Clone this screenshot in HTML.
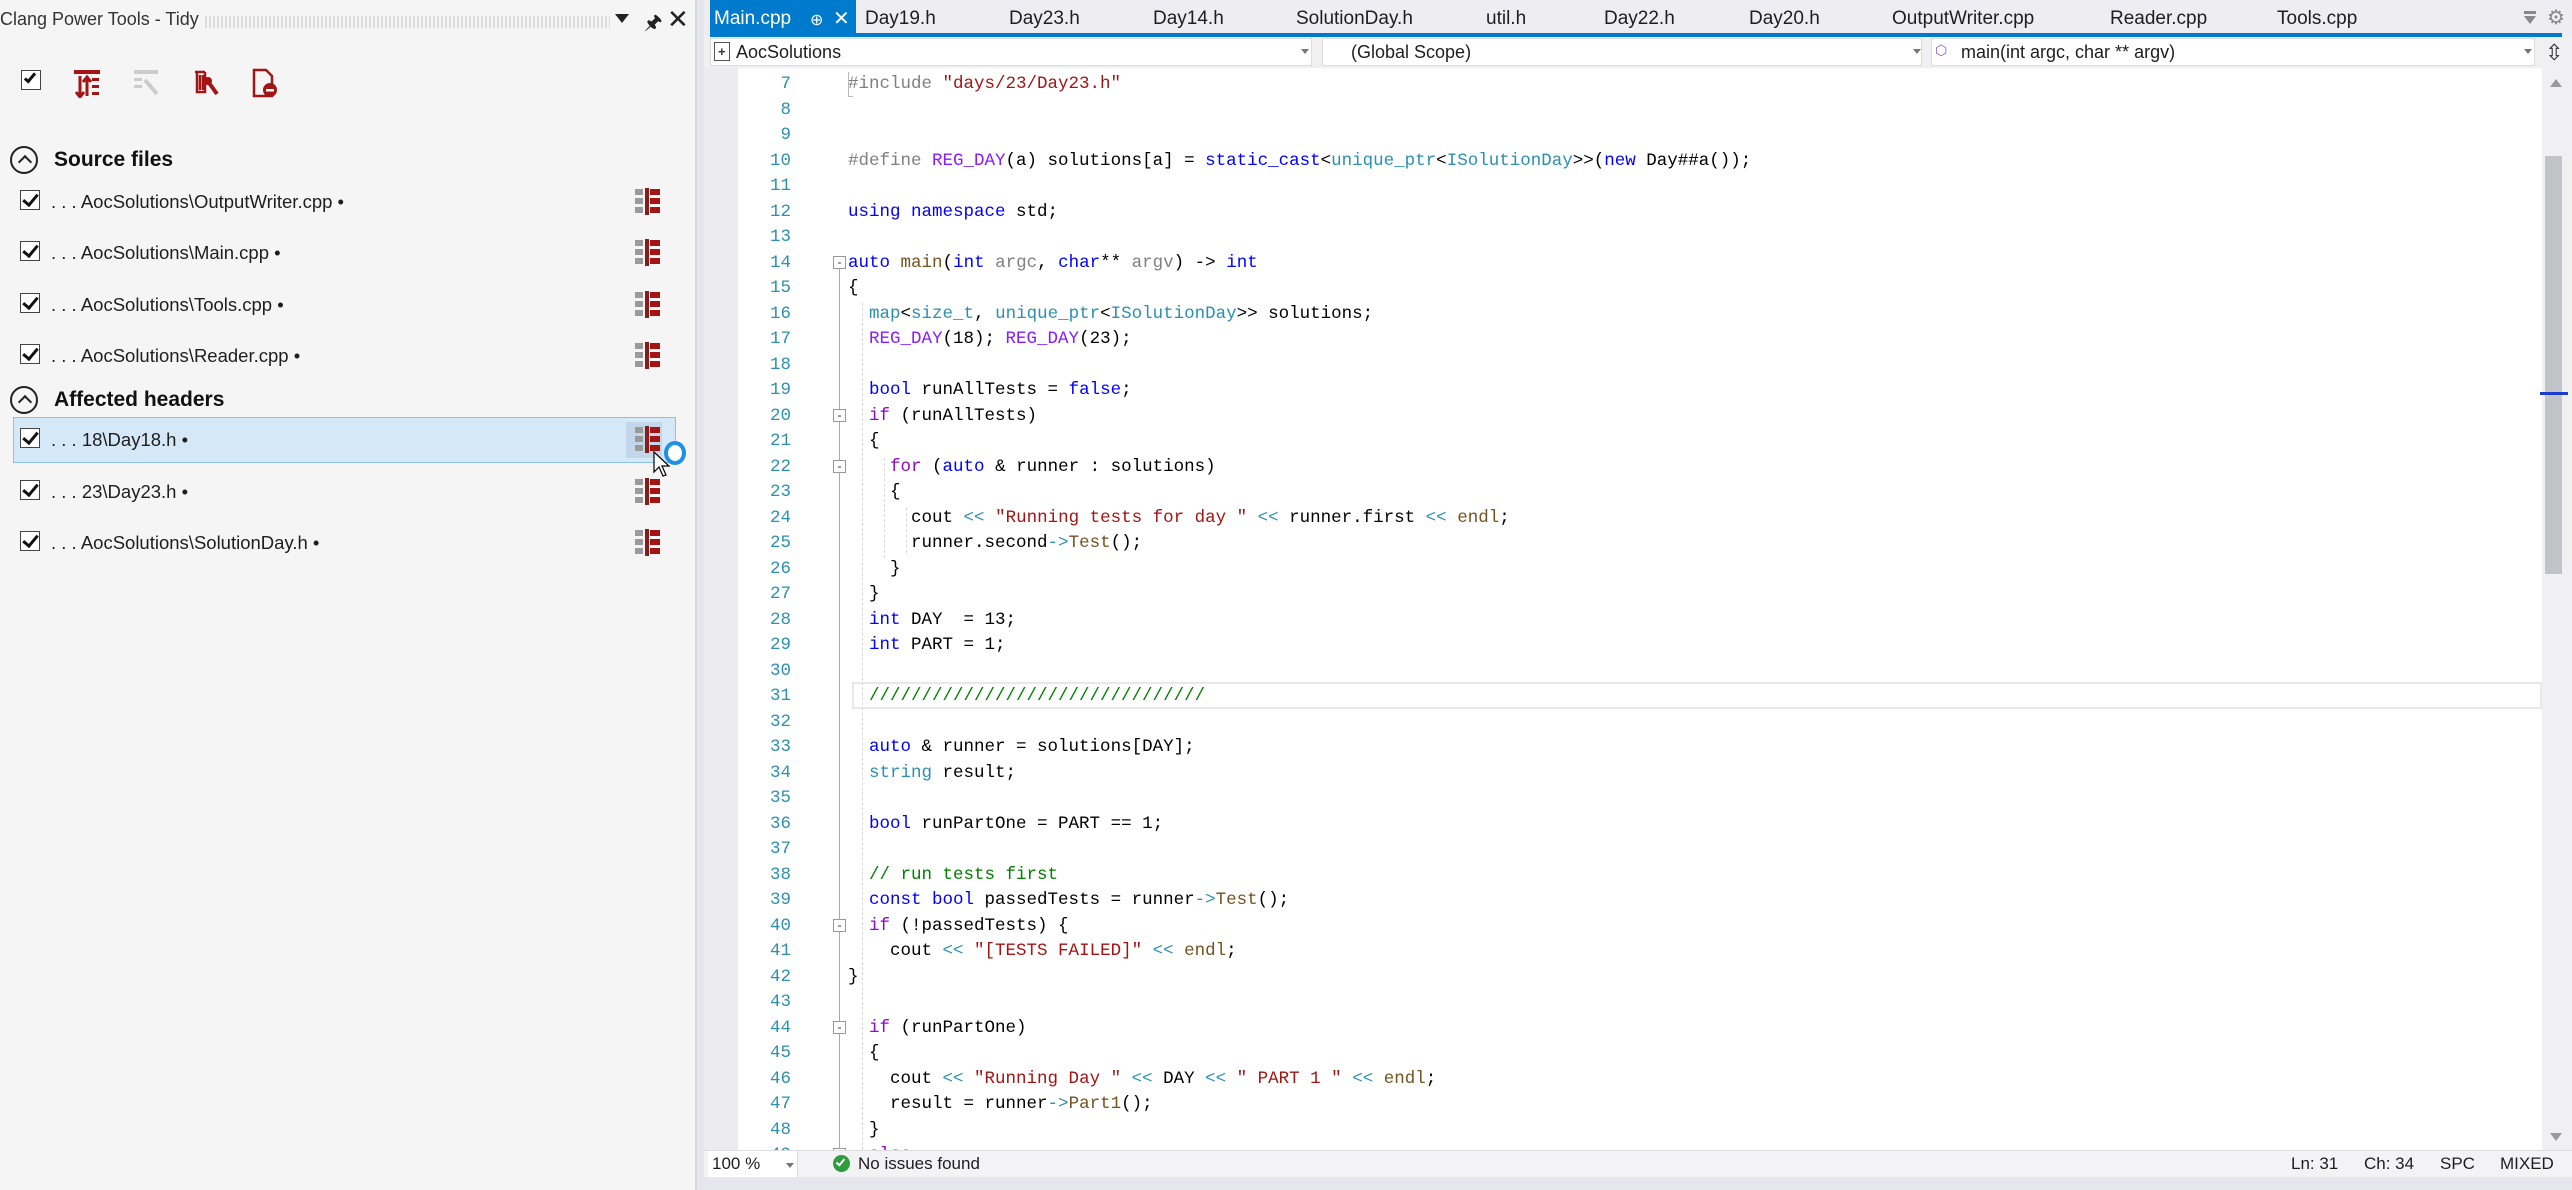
<!DOCTYPE html>
<html><head><meta charset="utf-8">
<style>
*{margin:0;padding:0;box-sizing:border-box}
body{width:2572px;height:1190px;overflow:hidden;background:#e6e7ee;font-family:"Liberation Sans",sans-serif;position:relative}
.abs{position:absolute}
#left{left:0;top:0;width:697px;height:1190px;background:#f5f5f6;border-right:2px solid #d8d9e0}
.ttl{font-size:18px;color:#333;top:9px;left:0}
.row{position:absolute;left:13px;width:663px;height:46px}
.row .cb{position:absolute;left:7px;top:11px;width:20px;height:20px;border:1.5px solid #444;background:#fff}
.row .cb:after{content:"";position:absolute;left:5px;top:0px;width:6px;height:12px;border:solid #111;border-width:0 3px 3px 0;transform:rotate(40deg)}
.row .tx{position:absolute;left:38px;top:12px;font-size:18.5px;color:#1e1e1e;white-space:nowrap}
.row svg{position:absolute;left:622px;top:8px}
.hdr{position:absolute;left:10px;font-size:21px;font-weight:bold;color:#111}
.hdr .c{position:absolute;left:0;top:0;width:28px;height:28px;border:2px solid #222;border-radius:50%}
.hdr .c:after{content:"";position:absolute;left:8px;top:9px;width:8px;height:8px;border:solid #222;border-width:2px 0 0 2px;transform:rotate(45deg)}
.hdr span{position:absolute;left:44px;top:2px;white-space:nowrap}
#tabs{left:704px;top:0;width:1868px;height:37px;background:#eeeef2}
.tab{position:absolute;top:8px;font-size:19px;color:#1e1e1e;white-space:nowrap}
#code{left:704px;top:68px;width:1838px;height:1082px;background:#fff;overflow:hidden}
.ln{position:absolute;left:0;width:87px;text-align:right;font-family:"Liberation Mono",monospace;font-size:17.5px;color:#2b91af;height:25.5px;line-height:25.5px}
.cl{position:absolute;left:144px;font-family:"Liberation Mono",monospace;font-size:17.5px;color:#000;white-space:pre;height:25.5px;line-height:25.5px}
.k{color:#0000ff}.t{color:#2b91af}.m{color:#8a1bff}.s{color:#a31515}.c{color:#008000}.p{color:#808080}.f{color:#74531f}.pr{color:#808080}.kw2{color:#8f08c4}
.fold{position:absolute;left:129px;width:13px;height:13px;border:1px solid #999;background:#fff;font-size:12px;line-height:10px;text-align:center;color:#333}
</style></head><body>

<div id="left" class="abs">
  <div class="abs ttl">Clang Power Tools - Tidy</div>
  <div class="abs" style="left:205px;top:16px;width:405px;height:12px;background:repeating-linear-gradient(90deg,#ccc 0 2px,transparent 2px 4px);opacity:.6"></div>
  <div class="abs" style="left:615px;top:14px;width:0;height:0;border-left:7px solid transparent;border-right:7px solid transparent;border-top:9px solid #222"></div>
  <div class="abs" style="left:644px;top:8px;font-size:20px;color:#222">&#x1F588;</div>
  <div class="abs" style="left:667px;top:4px;font-size:26px;color:#222">&#x2715;</div>

  <div class="abs" style="left:21px;top:70px;width:20px;height:20px;border:1.5px solid #444;background:#fff"><div style="position:absolute;left:5px;top:0;width:6px;height:12px;border:solid #111;border-width:0 3px 3px 0;transform:rotate(40deg)"></div></div>
  <svg class="abs" style="left:74px;top:70px" width="26" height="28" viewBox="0 0 26 28"><rect x="0" y="0" width="26" height="4" fill="#a31515"/><path d="M6 6v20M2 22l4 5 4-5M13 26V8M9 12l4-5 4 5" stroke="#a31515" stroke-width="3" fill="none"/><rect x="18" y="8" width="7" height="3" fill="#a31515"/><rect x="18" y="15" width="7" height="3" fill="#a31515"/><rect x="18" y="22" width="7" height="3" fill="#a31515"/></svg>
  <svg class="abs" style="left:134px;top:70px" width="26" height="28" viewBox="0 0 26 28"><rect x="0" y="0" width="24" height="4" fill="#ccc"/><rect x="0" y="8" width="8" height="3" fill="#ccc"/><rect x="0" y="15" width="8" height="3" fill="#ccc"/><path d="M11 10l12 14" stroke="#ccc" stroke-width="4"/></svg>
  <svg class="abs" style="left:193px;top:68px" width="28" height="30" viewBox="0 0 28 30"><path d="M2 4h10M4 4v20h8V4M7 7v15M10 7v15" stroke="#a31515" stroke-width="2.5" fill="none"/><path d="M14 12l10 14" stroke="#a31515" stroke-width="4"/><circle cx="15" cy="13" r="4" fill="#a31515"/></svg>
  <svg class="abs" style="left:252px;top:68px" width="26" height="30" viewBox="0 0 26 30"><path d="M2 2h12l6 6v20H2z" stroke="#a31515" stroke-width="2.5" fill="none"/><circle cx="18" cy="22" r="7" fill="#a31515"/><rect x="14" y="21" width="8" height="2.5" fill="#fff"/></svg>

  <div class="hdr" style="top:146px"><div class="c"></div><span>Source files</span></div>
  <div class="row" style="top:179px"><div class="cb"></div><div class="tx">. . . AocSolutions\OutputWriter.cpp •</div><svg width="26" height="30"><use href="#ri"/></svg></div>
  <div class="row" style="top:230px"><div class="cb"></div><div class="tx">. . . AocSolutions\Main.cpp •</div><svg width="26" height="30"><use href="#ri"/></svg></div>
  <div class="row" style="top:282px"><div class="cb"></div><div class="tx">. . . AocSolutions\Tools.cpp •</div><svg width="26" height="30"><use href="#ri"/></svg></div>
  <div class="row" style="top:333px"><div class="cb"></div><div class="tx">. . . AocSolutions\Reader.cpp •</div><svg width="26" height="30"><use href="#ri"/></svg></div>
  <div class="hdr" style="top:386px"><div class="c"></div><span>Affected headers</span></div>
  <div class="row" style="top:417px;background:#d5e8f8;border:1.5px solid #8ec0ee"><div class="cb" style="left:6px;top:10px"></div><div class="tx" style="left:37px;top:11px">. . . 18\Day18.h •</div><div style="position:absolute;left:612px;top:4px;width:36px;height:36px;background:#c4d7ea"></div><svg width="26" height="30" style="left:621px;top:7px"><use href="#ri"/></svg></div>
  <div class="abs" style="left:664px;top:441px;width:22px;height:24px;border:4px solid #1e90e6;border-radius:50%;background:#fff"></div>
  <svg class="abs" style="left:653px;top:451px" width="18" height="28" viewBox="0 0 18 28"><path d="M1 1v20l5-5 4 9 3-1-4-9h7z" fill="#fff" stroke="#000" stroke-width="1.2"/></svg>
  <div class="row" style="top:469px"><div class="cb"></div><div class="tx">. . . 23\Day23.h •</div><svg width="26" height="30"><use href="#ri"/></svg></div>
  <div class="row" style="top:520px"><div class="cb"></div><div class="tx">. . . AocSolutions\SolutionDay.h •</div><svg width="26" height="30"><use href="#ri"/></svg></div>
</div>

<svg width="0" height="0" style="position:absolute"><defs><g id="ri"><rect x="0" y="2" width="8" height="6" fill="#9a9a9a"/><rect x="0" y="11" width="8" height="6" fill="#9a9a9a"/><rect x="0" y="20" width="8" height="6" fill="#9a9a9a"/><rect x="10" y="1" width="4" height="27" fill="#8b1a1a"/><rect x="15" y="2" width="10" height="6" fill="#a31515"/><rect x="15" y="11" width="10" height="6" fill="#a31515"/><rect x="15" y="20" width="10" height="6" fill="#a31515"/></g></defs></svg>

<div id="tabs" class="abs">
  <div class="abs" style="left:6px;top:0;width:146px;height:34px;background:#007acc"></div>
  <div class="tab" style="left:10px;color:#fff">Main.cpp</div>
  <div class="tab" style="left:106px;color:#fff;font-size:16px;top:10px">&#x2295;</div>
  <div class="tab" style="left:129px;color:#fff;font-size:20px;top:6px">&#x2715;</div>
  <div class="tab" style="left:161px">Day19.h</div>
  <div class="tab" style="left:305px">Day23.h</div>
  <div class="tab" style="left:449px">Day14.h</div>
  <div class="tab" style="left:592px">SolutionDay.h</div>
  <div class="tab" style="left:782px">util.h</div>
  <div class="tab" style="left:900px">Day22.h</div>
  <div class="tab" style="left:1045px">Day20.h</div>
  <div class="tab" style="left:1188px">OutputWriter.cpp</div>
  <div class="tab" style="left:1406px">Reader.cpp</div>
  <div class="tab" style="left:1573px">Tools.cpp</div>
  <div class="abs" style="left:1820px;top:11px;width:12px;height:3px;background:#888"></div>
  <div class="abs" style="left:1820px;top:16px;width:0;height:0;border-left:6px solid transparent;border-right:6px solid transparent;border-top:8px solid #888"></div>
  <div class="tab" style="left:1843px;color:#888;font-size:20px;top:5px">&#x2699;</div>
  <div class="abs" style="left:6px;top:33px;width:1852px;height:4px;background:#007acc"></div>
</div>

<div class="abs" style="left:704px;top:37px;width:1868px;height:31px;background:#f0f0f2"></div>
<div class="abs" style="left:710px;top:38px;width:602px;height:28px;background:#fff;border:1px solid #ddd"></div>
<div class="abs" style="left:714px;top:42px;width:16px;height:19px;border:1.5px solid #555;background:#fff"><div style="position:absolute;left:3px;top:1px;font-size:13px;font-weight:bold;color:#333">+</div></div>
<div class="abs" style="left:736px;top:42px;font-size:18px;color:#1e1e1e">AocSolutions</div>
<div class="abs" style="left:1301px;top:49px;border-left:4px solid transparent;border-right:4px solid transparent;border-top:5px solid #777"></div>
<div class="abs" style="left:1322px;top:38px;width:600px;height:28px;background:#fff;border:1px solid #ddd"></div>
<div class="abs" style="left:1351px;top:42px;font-size:18px;color:#1e1e1e">(Global Scope)</div>
<div class="abs" style="left:1913px;top:49px;border-left:4px solid transparent;border-right:4px solid transparent;border-top:5px solid #777"></div>
<div class="abs" style="left:1931px;top:38px;width:604px;height:28px;background:#fff;border:1px solid #ddd"></div>
<div class="abs" style="left:1935px;top:42px;font-size:14px;color:#8a5bbd">&#x2B21;</div>
<div class="abs" style="left:1961px;top:42px;font-size:18px;color:#1e1e1e">main(int argc, char ** argv)</div>
<div class="abs" style="left:2524px;top:49px;border-left:4px solid transparent;border-right:4px solid transparent;border-top:5px solid #777"></div>
<div class="abs" style="left:2545px;top:40px;font-size:22px;color:#333">&#x21F3;</div>

<div id="code" class="abs">
  <div class="abs" style="left:0;top:0;width:34px;height:1082px;background:#ececef"></div>
  <div class="abs" style="left:135px;top:197px;width:1px;height:885px;background:#aaa"></div>
  <div class="abs" style="left:144px;top:4px;width:1px;height:24px;background:#bbb"></div>
  <div class="abs" style="left:144px;top:28px;width:5px;height:1px;background:#bbb"></div>
  <div class="abs" style="left:148px;top:614px;width:1690px;height:27px;border:2px solid #e8e8ec"></div>
  <div class="abs" style="left:158px;top:235px;width:0;height:847px;border-left:1px dashed #d8d8d8"></div>
  <div class="abs" style="left:180px;top:390px;width:0;height:100px;border-left:1px dashed #d8d8d8"></div>
  <div class="abs" style="left:202px;top:440px;width:0;height:45px;border-left:1px dashed #d8d8d8"></div>
  <div class="fold" style="top:188px">-</div>
  <div class="fold" style="top:341px">-</div>
  <div class="fold" style="top:392px">-</div>
  <div class="fold" style="top:851px">-</div>
  <div class="fold" style="top:953px">-</div>
  <div class="fold" style="top:1080px">-</div>
</div>
<div id="lines" class="abs" style="left:704px;top:72px;width:1838px;height:1078px;overflow:hidden">
<div class="ln" style="top:0">7</div><div class="cl" style="top:0"><span class="pr">#include</span> <span class="s">"days/23/Day23.h"</span></div>
<div class="ln" style="top:25.5px">8</div>
<div class="ln" style="top:51px">9</div>
<div class="ln" style="top:76.5px">10</div><div class="cl" style="top:76.5px"><span class="pr">#define</span> <span class="m">REG_DAY</span>(a) solutions[a] = <span class="k">static_cast</span>&lt;<span class="t">unique_ptr</span>&lt;<span class="t">ISolutionDay</span>&gt;&gt;(<span class="k">new</span> Day##a());</div>
<div class="ln" style="top:102px">11</div>
<div class="ln" style="top:127.5px">12</div><div class="cl" style="top:127.5px"><span class="k">using namespace</span> std;</div>
<div class="ln" style="top:153px">13</div>
<div class="ln" style="top:178.5px">14</div><div class="cl" style="top:178.5px"><span class="k">auto</span> <span class="f">main</span>(<span class="k">int</span> <span class="p">argc</span>, <span class="k">char</span>** <span class="p">argv</span>) -&gt; <span class="k">int</span></div>
<div class="ln" style="top:204px">15</div><div class="cl" style="top:204px">{</div>
<div class="ln" style="top:229.5px">16</div><div class="cl" style="top:229.5px">  <span class="t">map</span>&lt;<span class="t">size_t</span>, <span class="t">unique_ptr</span>&lt;<span class="t">ISolutionDay</span>&gt;&gt; solutions;</div>
<div class="ln" style="top:255px">17</div><div class="cl" style="top:255px">  <span class="m">REG_DAY</span>(18); <span class="m">REG_DAY</span>(23);</div>
<div class="ln" style="top:280.5px">18</div>
<div class="ln" style="top:306px">19</div><div class="cl" style="top:306px">  <span class="k">bool</span> runAllTests = <span class="k">false</span>;</div>
<div class="ln" style="top:331.5px">20</div><div class="cl" style="top:331.5px">  <span class="kw2">if</span> (runAllTests)</div>
<div class="ln" style="top:357px">21</div><div class="cl" style="top:357px">  {</div>
<div class="ln" style="top:382.5px">22</div><div class="cl" style="top:382.5px">    <span class="kw2">for</span> (<span class="k">auto</span> &amp; runner : solutions)</div>
<div class="ln" style="top:408px">23</div><div class="cl" style="top:408px">    {</div>
<div class="ln" style="top:433.5px">24</div><div class="cl" style="top:433.5px">      cout <span class="t">&lt;&lt;</span> <span class="s">"Running tests for day "</span> <span class="t">&lt;&lt;</span> runner.first <span class="t">&lt;&lt;</span> <span class="f">endl</span>;</div>
<div class="ln" style="top:459px">25</div><div class="cl" style="top:459px">      runner.second<span class="t">-&gt;</span><span class="f">Test</span>();</div>
<div class="ln" style="top:484.5px">26</div><div class="cl" style="top:484.5px">    }</div>
<div class="ln" style="top:510px">27</div><div class="cl" style="top:510px">  }</div>
<div class="ln" style="top:535.5px">28</div><div class="cl" style="top:535.5px">  <span class="k">int</span> DAY  = 13;</div>
<div class="ln" style="top:561px">29</div><div class="cl" style="top:561px">  <span class="k">int</span> PART = 1;</div>
<div class="ln" style="top:586.5px">30</div>
<div class="ln" style="top:612px">31</div><div class="cl" style="top:612px">  <span class="c">////////////////////////////////</span></div>
<div class="ln" style="top:637.5px">32</div>
<div class="ln" style="top:663px">33</div><div class="cl" style="top:663px">  <span class="k">auto</span> &amp; runner = solutions[DAY];</div>
<div class="ln" style="top:688.5px">34</div><div class="cl" style="top:688.5px">  <span class="t">string</span> result;</div>
<div class="ln" style="top:714px">35</div>
<div class="ln" style="top:739.5px">36</div><div class="cl" style="top:739.5px">  <span class="k">bool</span> runPartOne = PART == 1;</div>
<div class="ln" style="top:765px">37</div>
<div class="ln" style="top:790.5px">38</div><div class="cl" style="top:790.5px">  <span class="c">// run tests first</span></div>
<div class="ln" style="top:816px">39</div><div class="cl" style="top:816px">  <span class="k">const bool</span> passedTests = runner<span class="t">-&gt;</span><span class="f">Test</span>();</div>
<div class="ln" style="top:841.5px">40</div><div class="cl" style="top:841.5px">  <span class="kw2">if</span> (!passedTests) {</div>
<div class="ln" style="top:867px">41</div><div class="cl" style="top:867px">    cout <span class="t">&lt;&lt;</span> <span class="s">"[TESTS FAILED]"</span> <span class="t">&lt;&lt;</span> <span class="f">endl</span>;</div>
<div class="ln" style="top:892.5px">42</div><div class="cl" style="top:892.5px">}</div>
<div class="ln" style="top:918px">43</div>
<div class="ln" style="top:943.5px">44</div><div class="cl" style="top:943.5px">  <span class="kw2">if</span> (runPartOne)</div>
<div class="ln" style="top:969px">45</div><div class="cl" style="top:969px">  {</div>
<div class="ln" style="top:994.5px">46</div><div class="cl" style="top:994.5px">    cout <span class="t">&lt;&lt;</span> <span class="s">"Running Day "</span> <span class="t">&lt;&lt;</span> DAY <span class="t">&lt;&lt;</span> <span class="s">" PART 1 "</span> <span class="t">&lt;&lt;</span> <span class="f">endl</span>;</div>
<div class="ln" style="top:1020px">47</div><div class="cl" style="top:1020px">    result = runner<span class="t">-&gt;</span><span class="f">Part1</span>();</div>
<div class="ln" style="top:1045.5px">48</div><div class="cl" style="top:1045.5px">  }</div>
<div class="ln" style="top:1071px">49</div><div class="cl" style="top:1071px">  <span class="kw2">else</span></div>
</div>

<div class="abs" style="left:2542px;top:68px;width:30px;height:1082px;background:#f0f0f2"></div>
<div class="abs" style="left:2550px;top:79px;border-left:6px solid transparent;border-right:6px solid transparent;border-bottom:8px solid #999"></div>
<div class="abs" style="left:2545px;top:156px;width:17px;height:418px;background:#c2c3c9"></div>
<div class="abs" style="left:2540px;top:392px;width:28px;height:3px;background:#1c3bcf"></div>
<div class="abs" style="left:2550px;top:1133px;border-left:6px solid transparent;border-right:6px solid transparent;border-top:8px solid #999"></div>

<div class="abs" style="left:704px;top:1150px;width:1868px;height:27px;background:#f3f3f5;border-top:1px solid #ddd"></div>
<div class="abs" style="left:708px;top:1151px;width:90px;height:26px;background:#fff;border-right:1px solid #ddd"></div>
<div class="abs" style="left:712px;top:1154px;font-size:17px;color:#1e1e1e">100 %</div>
<div class="abs" style="left:786px;top:1163px;border-left:4px solid transparent;border-right:4px solid transparent;border-top:5px solid #777"></div>
<div class="abs" style="left:833px;top:1155px;width:17px;height:17px;border-radius:50%;background:#2e9d3e"><div style="position:absolute;left:5px;top:2px;width:5px;height:9px;border:solid #fff;border-width:0 2px 2px 0;transform:rotate(40deg)"></div></div>
<div class="abs" style="left:858px;top:1154px;font-size:17px;color:#1e1e1e">No issues found</div>
<div class="abs" style="left:2291px;top:1154px;font-size:17px;color:#1e1e1e">Ln: 31</div>
<div class="abs" style="left:2364px;top:1154px;font-size:17px;color:#1e1e1e">Ch: 34</div>
<div class="abs" style="left:2440px;top:1154px;font-size:17px;color:#1e1e1e">SPC</div>
<div class="abs" style="left:2500px;top:1154px;font-size:17px;color:#1e1e1e">MIXED</div>
</body></html>
